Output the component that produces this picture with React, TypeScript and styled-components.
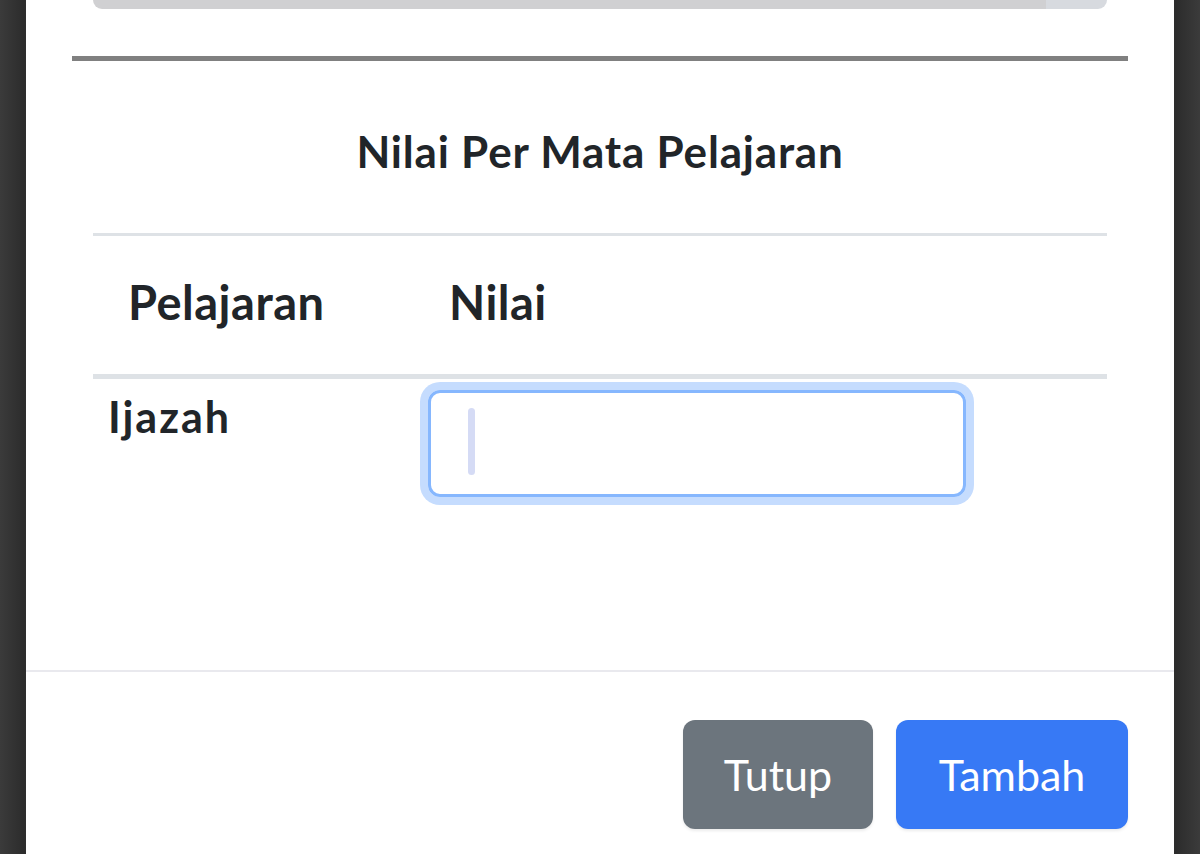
import styled, { createGlobalStyle } from "styled-components";

const GlobalStyle = createGlobalStyle`
    html, body {
        margin: 0;
        padding: 0;
        background: #363636;
    }
    * {
        box-sizing: border-box;
    }
`;

const Screen = styled.div`
    width: 1200px;
    height: 854px;
    overflow: hidden;
    display: flex;
    justify-content: center;
    background: linear-gradient(90deg, #3b3b3b 0%, #2c2c2c 2%, #363636 3%, #363636 97%, #2c2c2c 98%, #3b3b3b 100%);
    font-family: "Lato", "Open Sans", sans-serif;
    color: #212529;
`;

const Modal = styled.div`
    width: 1148px;
    height: 100%;
    background: #ffffff;
    display: flex;
    flex-direction: column;
`;

const Body = styled.div`
    padding: 0 46px;
    height: 670px;
    display: flex;
    flex-direction: column;
`;

const ScrollTrack = styled.div`
    margin: 0 21px;
    height: 9px;
    border-radius: 0 0 12px 12px;
    background: linear-gradient(90deg, #d0d0d2 0%, #d0d0d2 94%, #d7dadf 94%, #d7dadf 100%);
`;

const Rule = styled.hr`
    margin: 47px 0 0;
    height: 5px;
    border: none;
    background: #808080;
`;

const Title = styled.h5`
    margin: 64px 0 0;
    text-align: center;
    font-size: 44px;
    font-weight: 700;
    letter-spacing: 0.8px;
    line-height: 52px;
`;

const Table = styled.div`
    margin: 56px 21px 0;
    border-top: 3px solid #dee2e6;
    display: grid;
    grid-template-columns: 321px 1fr;
`;

const HeadCell = styled.div`
    padding: 38px 35px 0;
    height: 143px;
    font-size: 47px;
    font-weight: 700;
    letter-spacing: 0.5px;
    line-height: 56px;
    border-bottom: 5px solid #dee2e6;
`;

const BodyCell = styled.div<{ $pad: number; $top: number }>`
    padding: ${p => p.$top}px ${p => p.$pad}px 0;
    font-size: 43px;
    font-weight: 700;
    letter-spacing: 2px;
    line-height: 50px;
`;

const Field = styled.div`
    width: 538px;
    height: 107px;
    border: 3px solid #86b7fe;
    border-radius: 12px;
    box-shadow: 0 0 0 8px #c5dcfe;
    padding: 15px 37px;
    display: flex;
    align-items: flex-start;
`;

const Caret = styled.span`
    display: block;
    width: 7px;
    height: 67px;
    border-radius: 4px;
    background: #d5dbf5;
`;

const Footer = styled.div`
    border-top: 2px solid #e9e9ee;
    display: flex;
    justify-content: flex-end;
    gap: 23px;
    padding: 48px 46px 0;
`;

const Button = styled.button<{ $tone: "secondary" | "primary"; $w: number }>`
    width: ${p => p.$w}px;
    height: 109px;
    border: none;
    border-radius: 12px;
    font-family: inherit;
    font-size: 43px;
    font-weight: 400;
    color: #ffffff;
    background: ${p => (p.$tone === "primary" ? "#3779f5" : "#6c757d")};
    box-shadow: 0 2px 3px rgba(0, 0, 0, 0.08);
`;

export default function App() {
    return (
        <Screen>
            <GlobalStyle />
            <Modal>
                <Body>
                    <ScrollTrack />
                    <Rule />
                    <Title>Nilai Per Mata Pelajaran</Title>
                    <Table>
                        <HeadCell>Pelajaran</HeadCell>
                        <HeadCell>Nilai</HeadCell>
                        <BodyCell $pad={15} $top={13}>Ijazah</BodyCell>
                        <BodyCell $pad={14} $top={11}>
                            <Field>
                                <Caret />
                            </Field>
                        </BodyCell>
                    </Table>
                </Body>
                <Footer>
                    <Button $tone="secondary" $w={190}>Tutup</Button>
                    <Button $tone="primary" $w={232}>Tambah</Button>
                </Footer>
            </Modal>
        </Screen>
    );
}
